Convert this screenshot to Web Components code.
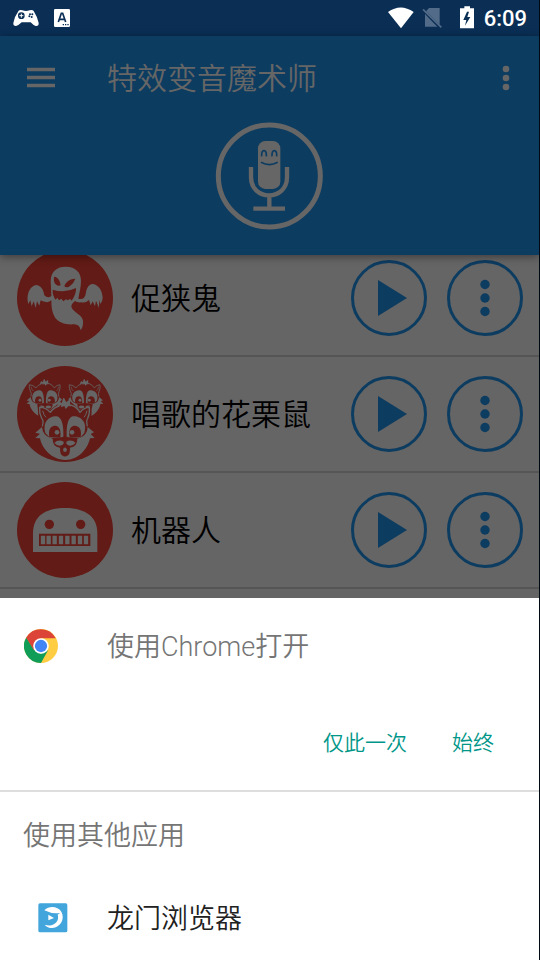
<!DOCTYPE html>
<html lang="zh-CN">
<head>
<meta charset="utf-8">
<meta name="viewport" content="width=device-width, initial-scale=1">
<title>特效变音魔术师</title>
<style>
html, body { height: 100%; margin: 0; background: #000; }
body { font-family: Roboto, "Noto Sans CJK SC", sans-serif; }
</style>
</head>
<body>
<voice-app></voice-app>
<script>
const BASE = `<style>
*, *::before, *::after { box-sizing: border-box; }
svg { display: block; }
button { margin: 0; padding: 0; border: 0; background: none; font: inherit; color: inherit; cursor: pointer; }
</style>`;

function define(name, html, setup) {
  const template = document.createElement('template');
  template.innerHTML = BASE + html;
  customElements.define(name, class extends HTMLElement {
    constructor() {
      super();
      this.attachShadow({ mode: 'open' }).append(template.content.cloneNode(true));
    }
    connectedCallback() { if (setup) setup(this); }
  });
}

/* Status bar */
define('status-bar', `<style>
:host { display: flex; align-items: center; justify-content: space-between; height: 36px; padding: 0 12px; background: #0a2e54; color: #fff; }
div { display: flex; align-items: center; }
.left { gap: 14px; }
.right { gap: 8px; }
time { padding-top: 2px; font-size: 22px; line-height: 34px; font-weight: 500; }
</style>
<div class="left">
<svg width="28" height="20" viewBox="36 24 84 60" aria-hidden="true"><path fill="#fff" d="M56 32Q60 28 67 31Q78 35 89 31Q97 28 101 33Q111 48 116 69Q117 79 107 78Q100 76 92 67H65Q55 77 48 78Q39 78 40 69Q44 48 56 32Z"/><circle cx="64" cy="47" r="10" fill="#0a2e54"/><path d="M64 41V53M58 47H70" stroke="#fff" stroke-width="3"/><g fill="#0a2e54"><circle cx="90" cy="43" r="3"/><circle cx="97" cy="43" r="3"/><circle cx="88" cy="49" r="3"/><circle cx="95" cy="51" r="3"/></g></svg>
<svg width="16" height="18" viewBox="162 27 48 54" aria-hidden="true"><rect x="162" y="27" width="48" height="54" rx="4" fill="#fff"/><path d="M175 66L184 40H188L197 66M178 58H194" fill="none" stroke="#0a2e54" stroke-width="5"/><path d="M188 74h4m3 0h4m3 0h4" stroke="#0a2e54" stroke-width="4"/></svg>
</div>
<div class="right">
<svg width="26" height="22" viewBox="62 19 78 66" overflow="visible" aria-hidden="true"><path fill="#fff" d="M65 34Q103 7 142 34L104 83Z"/></svg>
<svg width="21" height="22" viewBox="166 21 63 66" aria-hidden="true"><path fill="#526b88" d="M190 24H222V74L181 34ZM178 42L215 80H178Z"/><path d="M172 28L227 82" stroke="#526b88" stroke-width="5"/></svg>
<svg width="26" height="24" viewBox="240 17 78 72" aria-hidden="true"><path fill="#fff" d="M283 18H300V24H312V84H270V24H283Z"/><path fill="#0a2e54" d="M291 34L280 59H289L285 76L301 50H292L297 34Z"/></svg>
<time>6:09</time>
</div>`);

/* Header with title and microphone */
define('app-header', `<style>
:host { display: block; position: relative; z-index: 1; background: #0d3c61; color: #666; box-shadow: 0 2px 8px rgba(0,0,0,.4); }
.bar { display: flex; align-items: center; height: 84px; padding: 0 17px 0 24px; }
h1 { flex: 1; margin: 0 0 0 49px; padding-top: 2px; font-size: 30px; line-height: 44px; font-weight: 350; }
.hero { display: flex; justify-content: center; padding: 2px 0 25px; }
</style>
<div class="bar">
<button aria-label="菜单"><svg width="34" height="34" viewBox="0 0 34 34"><path d="M3 8.500H31M3 16.500H31M3 24.500H31" stroke="#666" stroke-width="3.600"/></svg></button>
<h1><slot></slot></h1>
<button aria-label="更多选项"><svg width="32" height="40" viewBox="0 0 32 40" fill="#666"><circle cx="16" cy="11" r="3.300"/><circle cx="16" cy="20" r="3.300"/><circle cx="16" cy="29" r="3.300"/></svg></button>
</div>
<div class="hero">
<button aria-label="录音"><svg width="108" height="108" viewBox="48 36 324 324" overflow="visible"><circle cx="208" cy="198" r="153" fill="none" stroke="#666" stroke-width="15"/><rect x="174" y="93" width="67" height="144" rx="22" fill="#666"/><g fill="none" stroke="#0d3c61" stroke-width="5"><path d="M185 139Q184 122 192 122Q200 122 199 139M216 139Q215 122 223 122Q231 122 230 139"/><path d="M183 157Q208 171 233 157"/></g><path d="M153 171V202C153 236 178 256 207 256S261 236 261 202V171M208 256V291M160 296H255" fill="none" stroke="#666" stroke-width="13"/></svg></button>
</div>`);

/* Effect pictures */
const ART = {
ghost: `<svg width="96" height="96" viewBox="51 30 288 288"><circle cx="195" cy="174" r="144" fill="#621b16"/>
<path fill="#656565" d="M152 122C153 92 174 79 198 80C226 81 243 96 243 122C243 142 238 157 235 176Q253 181 257 163C259 145 266 133 277 132C294 133 307 150 308 173Q308 185 301 192L298 179L297 204L288 182L285 199L278 184L272 196L267 180Q257 190 243 187Q231 188 225 183Q211 194 215 203C222 218 247 224 249 242Q251 257 242 271Q239 252 221 253C198 255 174 248 164 231C156 217 154 202 154 181Q146 190 128 184L122 181L118 197L111 184L107 204L101 184L95 199L91 181L85 192C79 171 85 150 96 141Q107 132 116 137C128 143 131 154 133 166Q144 177 154 168Z"/>
<path fill="#621b16" d="M162 110C172 109 180 121 182 136Q174 139 169 134Q160 129 162 110ZM226 116C211 116 197 125 193 139Q201 145 211 137Q221 130 226 116ZM158 149Q195 161 228 144Q229 163 215 182L210 176L204 181L198 178L190 184L184 176L177 181L172 173L167 179Q157 166 158 149Z"/></svg>`,
chipmunk: `<svg width="96" height="96" viewBox="51 33 288 288"><defs>
<g id="face"><path fill="#621b16" stroke="#656565" stroke-width="4" stroke-linejoin="round" d="M127 214Q132 196 125 190Q117 173 119 157Q138 157 151 172Q161 158 177 153L176 143L187 147L191 131L198 145L209 136L208 149L217 152Q231 157 240 172Q252 157 268 157Q270 176 263 190Q258 196 262 214"/>
<path fill="none" d="M128 167Q131 181 138 187M261 167Q258 181 252 187" stroke="#656565" stroke-width="3"/>
<path fill="#656565" d="M176 141L186 144L191 130L199 144L210 136L209 150L219 153L205 154L197 162L193 153L183 157L184 151L171 154Z"/>
<path fill="#656565" d="M136 234C126 200 149 181 171 184C186 188 191 211 190 245L177 248H150ZM253 234C264 200 240 181 218 184C204 188 199 211 200 245L212 248H240Z"/>
<path fill="#621b16" d="M148 246C144 224 152 213 164 212C178 211 184 226 181 248ZM242 246C246 224 238 213 225 212C211 211 205 226 209 248Z"/>
<circle cx="171" cy="232" r="7" fill="#656565"/><circle cx="216" cy="232" r="7" fill="#656565"/>
<path fill="#656565" d="M126 216L106 233L120 236L106 249L120 250C126 281 155 314 195 315S264 281 270 250L284 249L272 237L282 232L263 216Q262 240 240 248Q216 257 195 252Q172 257 150 248Q128 240 126 216Z"/>
<path fill="#621b16" d="M158 250H232Q233 276 210 278Q210 297 204 301Q195 308 186 301Q180 297 180 278Q157 276 158 250Z"/>
<path fill="#656565" d="M163 264Q174 252 191 260Q193 266 187 270Q174 276 163 264ZM199 260Q215 252 227 264Q215 276 203 270Q197 266 199 260ZM189 282L195 277L201 282L199 290H191Z"/></g></defs>
<circle cx="195" cy="177" r="144" fill="#621b16"/>
<g transform="translate(14 -8) scale(.62)"><use href="#face"/></g><g transform="translate(134 -8) scale(.62)"><use href="#face"/></g>
<path fill="#621b16" d="M113 152L151 164L177 145L195 122L216 144L240 164L275 152L274 205L284 235L250 280H140L98 237L116 205Z"/>
<use href="#face"/></svg>`,
robot: `<svg width="96" height="96" viewBox="51 36 288 288"><circle cx="195" cy="180" r="144" fill="#621b16"/><path fill="#656565" d="M99 246V190C99 138 136 114 195 114S292 138 292 190V246Z"/><g fill="#621b16"><circle cx="148" cy="163" r="14"/><circle cx="242" cy="163" r="14"/><path d="M117 191H271V228H117Z"/></g><path d="M129 197V223M146 197V223M164 197V223M183 197V223M202 197V223M221 197V223M240 197V223M258 197V223" stroke="#656565" stroke-width="13"/></svg>`
};

define('effect-row', `<style>
:host { display: flex; align-items: center; height: 116px; padding: 0 16px 0 17px; border-bottom: 2px solid #555; color: #000; }
.name { flex: 1; margin-left: 18px; padding-top: 2px; font-size: 30px; line-height: 44px; font-weight: 350; }
.actions { display: flex; gap: 20px; }
</style>
<div class="art"></div><div class="name"><slot></slot></div>
<div class="actions">
<button aria-label="播放"><svg width="76" height="76" viewBox="0 0 76 76"><circle cx="38" cy="38" r="36.500" fill="none" stroke="#0d3c61" stroke-width="3"/><path d="M27 20L56 38L27 56Z" fill="#0d3c61"/></svg></button>
<button aria-label="更多"><svg width="76" height="76" viewBox="0 0 76 76" fill="#0d3c61"><circle cx="38" cy="38" r="36.500" fill="none" stroke="#0d3c61" stroke-width="3"/><circle cx="38" cy="24.500" r="4.700"/><circle cx="38" cy="38" r="4.700"/><circle cx="38" cy="51.500" r="4.700"/></svg></button>
</div>`, el => {
  el.shadowRoot.querySelector('.art').innerHTML = ART[el.getAttribute('art')] || '';
});

define('effect-list', `<style>
:host { display: block; flex: 1; min-height: 0; overflow: hidden; background: #656565; }
.scrolled { margin-top: -14px; }
</style><div class="scrolled"><slot></slot></div>`);

/* Bottom sheet */
define('text-action', `<style>
:host { display: block; }
button { min-height: 48px; padding: 2px 12px 0; font-size: 21px; line-height: 32px; font-weight: 350; color: #009688; }
</style><button><slot></slot></button>`);

define('app-choice', `<style>
:host { display: block; }
button { display: flex; align-items: center; width: 100%; min-height: 84px; padding: 0 24px; text-align: left; font-size: 27px; line-height: 40px; font-weight: 350; color: #212121; }
.icon { width: 83px; padding-left: 14px; }
.label { padding-top: 2px; }
</style><button><span class="icon"><slot name="icon"></slot></span><span class="label"><slot></slot></span></button>`);

define('open-sheet', `<style>
:host { display: block; background: #fff; color: #757575; font-size: 27px; line-height: 40px; }
h2 { margin: 0; padding-top: 2px; font: inherit; font-weight: 350; }
.head { display: flex; align-items: center; gap: 49px; height: 96px; padding: 0 24px; }
.actions { display: flex; justify-content: flex-end; align-items: center; gap: 21px; height: 96px; padding: 0 33px; }
.other { padding: 24px 23px 20px; border-top: 2px solid #dedede; }
</style>
<div class="head"><svg width="34" height="34" viewBox="0 0 48 48" aria-hidden="true"><circle cx="24" cy="24" r="24" fill="#ffcd42"/><path fill="#db4437" d="M3.200 12A24 24 0 0 1 44.800 13H24L14 29Z"/><path fill="#0f9d58" d="M3.200 12A24 24 0 0 0 24 48L34 30L24 35L14 29Z"/><path fill="#db4437" d="M3.200 12L14 30L24 13Z"/><circle cx="24" cy="24" r="11" fill="#fff"/><circle cx="24" cy="24" r="8.700" fill="#4285f4"/></svg><h2>使用Chrome打开</h2></div>
<div class="actions"><text-action>仅此一次</text-action><text-action>始终</text-action></div>
<h2 class="other">使用其他应用</h2>
<app-choice><svg slot="icon" style="display:block" width="30" height="30" viewBox="115 311 90 90" aria-hidden="true"><rect x="116" y="312" width="87" height="87" rx="5" fill="#42a5db"/><path fill="#fff" d="M134 333C149 318 174 321 185 337C197 359 182 384 158 386Q143 386 135 376Q158 383 170 369Q178 358 174 346L181 341Q158 345 134 333ZM146 346L163 356L146 363Z"/></svg>龙门浏览器</app-choice>`);

define('voice-app', `<style>
:host { display: flex; flex-direction: column; height: 100vh; border-right: 1px solid #000814; overflow: hidden; }
status-bar, app-header, open-sheet { flex-shrink: 0; }
</style>
<status-bar></status-bar>
<app-header>特效变音魔术师</app-header>
<effect-list>
<effect-row art="ghost">促狭鬼</effect-row>
<effect-row art="chipmunk">唱歌的花栗鼠</effect-row>
<effect-row art="robot">机器人</effect-row>
<effect-row></effect-row>
</effect-list>
<open-sheet></open-sheet>`);
</script>
</body>
</html>
